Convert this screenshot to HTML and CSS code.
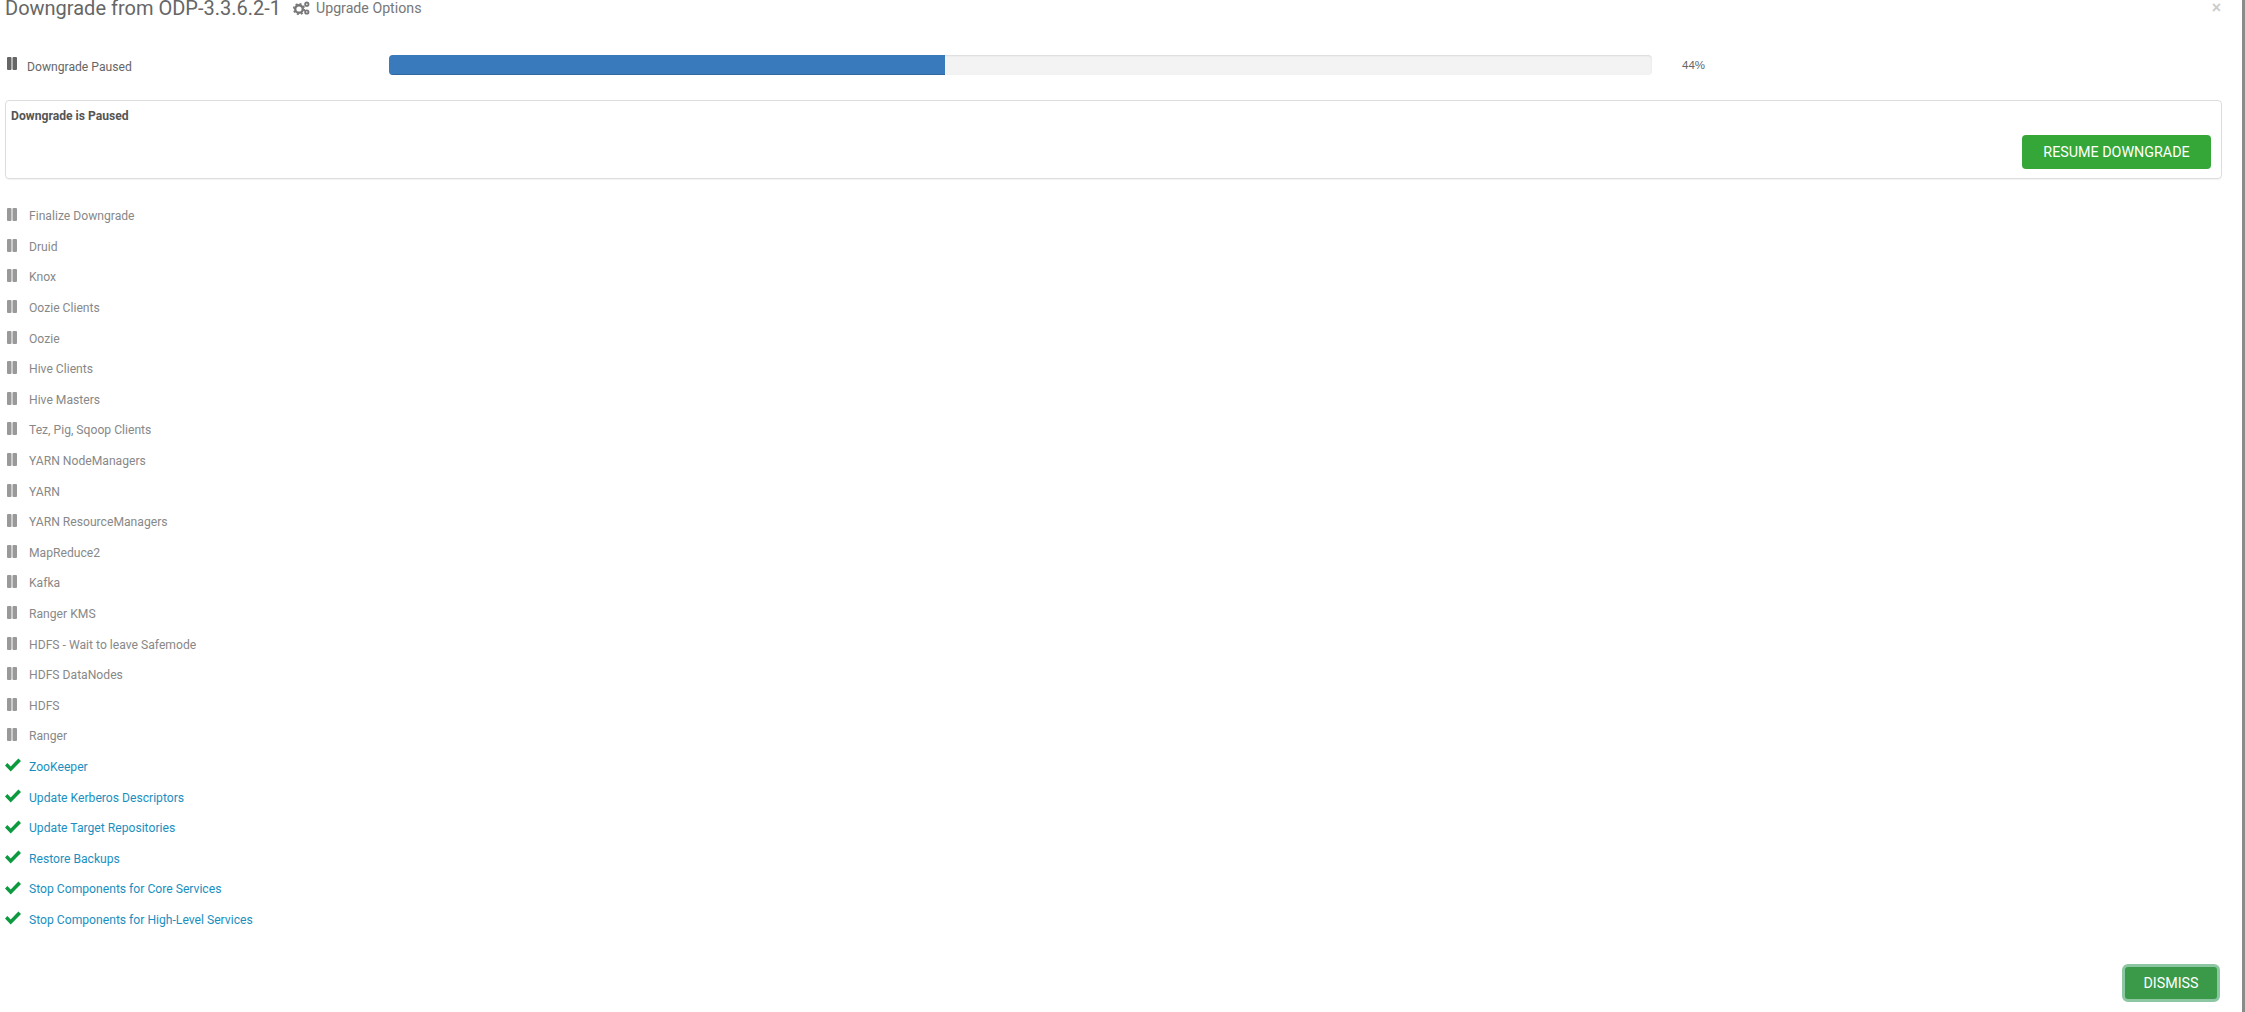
FILE: index.html
```html
<!DOCTYPE html>
<html lang="en">

<head>
    <meta charset="UTF-8">
    <meta name="viewport" content="width=device-width, initial-scale=1.0">
    <link rel="stylesheet" href="styles.css">
    <title>Downgrade from ODP-3.3.6.2-1</title>
</head>

<body>
    <svg class="defs" width="0" height="0">
        <symbol id="pause" viewBox="0 0 10 13">
            <path d="M0 1q0-1 1-1h2.500q1 0 1 1v11q0 1-1 1h-2.500q-1 0-1-1zM5.500 1q0-1 1-1h2.500q1 0 1 1v11q0 1-1 1h-2.500q-1 0-1-1z" />
        </symbol>
        <symbol id="check" viewBox="0 0 16 14">
            <path d="M0 7.500l2.400-2.400 3.300 3.300 7.700-7.900 2.600 2.500-10.300 10.500z" />
        </symbol>
    </svg>

    <div class="modal">
        <button class="close" type="button">&times;</button>

        <div class="header">
            <h2 class="title">Downgrade from ODP-3.3.6.2-1</h2>
            <a class="options">
                <svg class="cogs" viewBox="0 0 17 14">
                    <circle class="cog-big" cx="6" cy="8" r="3.800" />
                    <circle class="cog-teeth" cx="6" cy="8" r="5.300" />
                    <circle class="cog-small" cx="13.800" cy="3.200" r="1.700" />
                    <circle class="cog-small" cx="13.800" cy="11" r="1.700" />
                </svg>
                Upgrade Options
            </a>
        </div>

        <div class="status">
            <div class="status-label">
                <svg class="icon-pause dark"><use href="#pause" /></svg>
                <span>Downgrade Paused</span>
            </div>
            <div class="progress">
                <div class="progress-bar" style="width: 44%"></div>
            </div>
            <span class="percent">44%</span>
        </div>

        <div class="paused-box">
            <strong>Downgrade is Paused</strong>
            <div class="paused-actions">
                <button class="btn btn-resume" type="button">RESUME DOWNGRADE</button>
            </div>
        </div>

        <ul class="steps">
            <li><svg class="icon-pause"><use href="#pause" /></svg><span>Finalize Downgrade</span></li>
            <li><svg class="icon-pause"><use href="#pause" /></svg><span>Druid</span></li>
            <li><svg class="icon-pause"><use href="#pause" /></svg><span>Knox</span></li>
            <li><svg class="icon-pause"><use href="#pause" /></svg><span>Oozie Clients</span></li>
            <li><svg class="icon-pause"><use href="#pause" /></svg><span>Oozie</span></li>
            <li><svg class="icon-pause"><use href="#pause" /></svg><span>Hive Clients</span></li>
            <li><svg class="icon-pause"><use href="#pause" /></svg><span>Hive Masters</span></li>
            <li><svg class="icon-pause"><use href="#pause" /></svg><span>Tez, Pig, Sqoop Clients</span></li>
            <li><svg class="icon-pause"><use href="#pause" /></svg><span>YARN NodeManagers</span></li>
            <li><svg class="icon-pause"><use href="#pause" /></svg><span>YARN</span></li>
            <li><svg class="icon-pause"><use href="#pause" /></svg><span>YARN ResourceManagers</span></li>
            <li><svg class="icon-pause"><use href="#pause" /></svg><span>MapReduce2</span></li>
            <li><svg class="icon-pause"><use href="#pause" /></svg><span>Kafka</span></li>
            <li><svg class="icon-pause"><use href="#pause" /></svg><span>Ranger KMS</span></li>
            <li><svg class="icon-pause"><use href="#pause" /></svg><span>HDFS - Wait to leave Safemode</span></li>
            <li><svg class="icon-pause"><use href="#pause" /></svg><span>HDFS DataNodes</span></li>
            <li><svg class="icon-pause"><use href="#pause" /></svg><span>HDFS</span></li>
            <li><svg class="icon-pause"><use href="#pause" /></svg><span>Ranger</span></li>
            <li class="done"><svg class="icon-check"><use href="#check" /></svg><a>ZooKeeper</a></li>
            <li class="done"><svg class="icon-check"><use href="#check" /></svg><a>Update Kerberos Descriptors</a></li>
            <li class="done"><svg class="icon-check"><use href="#check" /></svg><a>Update Target Repositories</a></li>
            <li class="done"><svg class="icon-check"><use href="#check" /></svg><a>Restore Backups</a></li>
            <li class="done"><svg class="icon-check"><use href="#check" /></svg><a>Stop Components for Core Services</a></li>
            <li class="done"><svg class="icon-check"><use href="#check" /></svg><a>Stop Components for High-Level Services</a></li>
        </ul>

        <div class="footer">
            <button class="btn btn-dismiss" type="button">DISMISS</button>
        </div>
    </div>
</body>

</html>
```

FILE: styles.css
```css
* {
    box-sizing: border-box;
}

html,
body {
    margin: 0;
    height: 100%;
    overflow: hidden;
}

body {
    font-family: Roboto, "Liberation Sans", sans-serif;
    font-size: 12.15px;
    color: #666;
    background-color: #fff;
}

.defs {
    position: absolute;
}

.modal {
    position: relative;
    display: flex;
    flex-direction: column;
    height: 1012px;
    border-right: 3px solid #8a8a8a;
    padding: 0 20px 0 5px;
}

.close {
    position: absolute;
    top: 0;
    right: 21px;
    padding: 0;
    border: none;
    background: none;
    font-family: "Liberation Sans", sans-serif;
    font-size: 16px;
    font-weight: bold;
    line-height: 16px;
    color: #ccc;
}

.header {
    display: flex;
    align-items: center;
    height: 16px;
    gap: 12px;
}

.title {
    margin: 0;
    font-size: 20px;
    font-weight: 400;
    line-height: 16px;
    color: #666;
}

.options {
    display: flex;
    align-items: center;
    gap: 6px;
    font-size: 14.2px;
    color: #777;
}

.cogs {
    width: 17px;
    height: 14px;
}

.cog-big {
    fill: none;
    stroke: #777;
    stroke-width: 2.400px;
}

.cog-teeth {
    fill: none;
    stroke: #777;
    stroke-width: 1.600px;
    stroke-dasharray: 2 2.160;
}

.cog-small {
    fill: none;
    stroke: #777;
    stroke-width: 1.800px;
}

.status {
    display: flex;
    align-items: center;
    margin-top: 39px;
    height: 20px;
}

.status-label {
    display: flex;
    align-items: center;
    width: 384px;
    padding-left: 2px;
}

.status-label span {
    margin: 4px 0 0 10px;
}

.progress {
    width: 1263px;
    height: 20px;
    background-color: #f3f3f3;
    border-radius: 4px;
    box-shadow: inset 0 1px 2px rgba(0, 0, 0, 0.1);
    overflow: hidden;
}

.progress-bar {
    height: 100%;
    background-color: #387abb;
    box-shadow: inset 0 -1px 0 rgba(0, 0, 0, 0.15);
}

.percent {
    margin-left: 30px;
    font-family: "Liberation Sans", sans-serif;
    font-size: 11.5px;
    color: #666;
}

.paused-box {
    margin-top: 25px;
    width: 2217px;
    height: 79px;
    padding: 6px 10px 0 5px;
    border: 1px solid #ddd;
    border-radius: 4px;
    box-shadow: 0 1px 1px rgba(0, 0, 0, 0.05);
}

.paused-box strong {
    display: block;
    line-height: 18px;
    color: #555;
}

.paused-actions {
    display: flex;
    justify-content: flex-end;
    margin-top: 10px;
}

.btn {
    border: none;
    border-radius: 4px;
    font-family: Roboto, "Liberation Sans", sans-serif;
    font-size: 14.3px;
    color: #fff;
    cursor: pointer;
}

.btn-resume {
    width: 189px;
    height: 34px;
    background-color: #34a738;
}

.steps {
    list-style: none;
    margin: 22px 0 0;
    padding: 0;
}

.steps li {
    display: flex;
    align-items: center;
    height: 30.6px;
    color: #888;
}

.steps a {
    color: #1a8fbf;
}

.icon-pause {
    flex: none;
    width: 10px;
    height: 13px;
    margin: 0 12px 3px 2px;
    fill: #999;
}

.icon-pause.dark {
    margin: 0 0 3px;
    fill: #666;
}

.icon-check {
    flex: none;
    width: 16px;
    height: 14px;
    margin: 0 8px 3px 0;
    fill: #0b9a3d;
}

.footer {
    display: flex;
    justify-content: flex-end;
    margin-top: auto;
    padding: 0 2px 10px 0;
}

.btn-dismiss {
    width: 98px;
    height: 38px;
    background-color: #3a9a49;
    border: 3px solid #8cc6a2;
    border-radius: 6px;
}
```
